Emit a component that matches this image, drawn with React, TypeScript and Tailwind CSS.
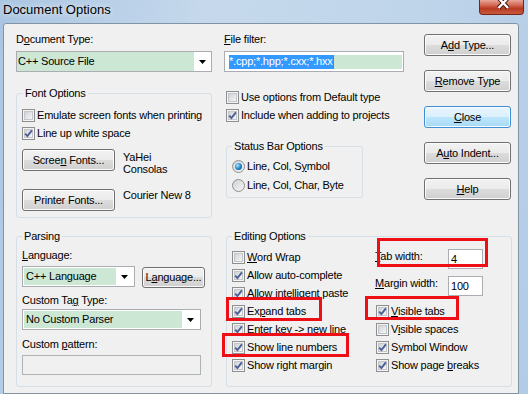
import type { ReactNode } from "react";

const font = "font-['Liberation_Sans',Arial,sans-serif]";

function U({ children }: { children: ReactNode }) {
  return <span className="underline decoration-1 underline-offset-[1px]">{children}</span>;
}

function Check({ on }: { on?: boolean }) {
  return (
    <span className="relative flex h-[13px] w-[13px] shrink-0 items-center justify-center border border-[#8e8f8f] bg-[#f4f4f4]">
      <span className="h-[9px] w-[9px] border border-[#c3c6cb] bg-[linear-gradient(135deg,#cfd2d7,#f5f5f6)]" />
      {on && (
        <svg className="absolute left-[-1px] top-[-1px]" width="13" height="13" viewBox="0 0 13 13">
          <path d="M3.2 6.6 L5.4 9.1 L9.9 3.4" fill="none" stroke="#4b5f92" strokeWidth="1.9" />
        </svg>
      )}
    </span>
  );
}

function Radio({ on }: { on?: boolean }) {
  return (
    <span className="flex h-[13px] w-[13px] shrink-0 items-center justify-center rounded-full border border-[#8e8f8f] bg-[linear-gradient(135deg,#cfd2d7,#f6f6f6)]">
      {on && (
        <span className="h-[7px] w-[7px] rounded-full bg-[radial-gradient(circle_at_35%_35%,#a6e3ff,#1b80c6_55%,#0b4d88)]" />
      )}
    </span>
  );
}

function CheckRow({ on, children, className = "" }: { on?: boolean; children: ReactNode; className?: string }) {
  return (
    <div className={`flex h-[18px] items-center gap-[2px] ${className}`}>
      <Check on={on} />
      <span>{children}</span>
    </div>
  );
}

function Btn({ children, className = "", primary }: { children: ReactNode; className?: string; primary?: boolean }) {
  const look = primary
    ? "border-[#3c8fd4] bg-[linear-gradient(#eaf6fd,#d9f0fc_50%,#bee6fd_50%,#a7d9f5)]"
    : "border-[#707070] bg-[linear-gradient(#f2f2f2,#ebebeb_50%,#dddddd_50%,#cfcfcf)]";
  return (
    <div
      className={`flex shrink-0 items-center justify-center rounded-[3px] border shadow-[inset_0_0_0_1px_#fbfbfb] ${look} ${className}`}
    >
      {children}
    </div>
  );
}

function Arrow() {
  return (
    <svg width="7" height="4" viewBox="0 0 7 4">
      <path d="M0 0h7L3.5 4z" fill="#000" />
    </svg>
  );
}

function Combo({ text, className = "", inset }: { text: string; className?: string; inset?: boolean }) {
  return (
    <div className={`flex h-[21px] border border-[#abadb3] bg-white ${inset ? "p-px" : ""} ${className}`}>
      <div className={`flex flex-1 items-center bg-[#cce8d5] ${inset ? "pl-[2px]" : "pl-px"}`}>{text}</div>
      <div className="flex w-[17px] items-center justify-center">
        <Arrow />
      </div>
    </div>
  );
}

function Group({ title, children, className = "", legendClass = "ml-[5px]" }: { title: string; children: ReactNode; className?: string; legendClass?: string }) {
  return (
    <fieldset className={`rounded-[3px] border border-[#d5dfe5] ${className}`}>
      <legend className={`px-[2px] ${legendClass}`}>{title}</legend>
      {children}
    </fieldset>
  );
}

export default function App() {
  return (
    <div
      className={`relative h-[394px] w-[528px] overflow-hidden bg-[linear-gradient(100deg,#aac5e2,#c6d9ec_35%,#bfd5ea_70%,#b3cce6)] text-[11px] leading-[13px] tracking-[-0.2px] text-black ${font}`}
    >
      {/* title bar */}
      <div className="flex h-[23px] items-start justify-between">
        <div className="ml-[3px] mt-[2px] text-[13px] leading-[16px] tracking-normal [text-shadow:0_0_6px_rgba(255,255,255,0.95)]">
          Document Options
        </div>
        <div className="mr-[4px] h-[15px] w-[45px] rounded-b-[4px] border border-t-0 border-[#7a2418] bg-[linear-gradient(#e6a89a,#d2634f_40%,#b83a22_60%,#c85a3f)]">
          <svg width="43" height="14" viewBox="0 0 43 14">
            <path d="M18.5 -2 L28 8 M28 -2 L18.5 8" stroke="#3d120c" strokeWidth="4.2" />
            <path d="M18.5 -2 L28 8 M28 -2 L18.5 8" stroke="#ffffff" strokeWidth="2.4" />
          </svg>
        </div>
      </div>

      {/* client area */}
      <div className="ml-[3px] h-[371px] w-[516px] rounded-t-[3px] border border-[#8293a4] bg-[#f0f0f0]">
        {/* top section */}
        <div className="flex pl-[12px] pt-[9px]">
          <div className="w-[196px]">
            <div>
              D<U>o</U>cument Type:
            </div>
            <Combo className="mt-[5px]" text="C++ Source File" />
            <Group title="Font Options" className="mt-[15px]" legendClass="ml-[6px]">
              <div className="pb-[6px] pl-[5px] pt-[6px]">
                <CheckRow>Emulate screen fonts when printing</CheckRow>
                <CheckRow on>Line up white space</CheckRow>
                <div className="mt-[7px] flex">
                  <Btn className="h-[22px] w-[93px]">
                    <span>
                      Scree<U>n</U> Fonts...
                    </span>
                  </Btn>
                  <div className="ml-[8px] mt-[2px] leading-[12px]">
                    YaHei
                    <br />
                    Consolas
                  </div>
                </div>
                <div className="mt-[14px] flex">
                  <Btn className="h-[22px] w-[93px]">Printer Fonts...</Btn>
                  <div className="ml-[8px]">Courier New 8</div>
                </div>
              </div>
            </Group>
          </div>

          <div className="ml-[12px] w-[180px]">
            <div>
              <U>F</U>ile filter:
            </div>
            <div className="mt-[5px] flex h-[21px] items-center border border-[#abadb3] bg-white">
              <div className="ml-[4px] mr-px flex h-[14px] flex-1 items-center bg-[#cce8d5]">
                <span className="flex h-full items-center bg-[#3399ff] text-white">*.cpp;*.hpp;*.cxx;*.hxx</span>
                <span className="h-full w-px bg-[#c8641e]" />
              </div>
            </div>
            <div className="mt-[16px] pl-[2px]">
              <CheckRow>Use options from Default type</CheckRow>
              <CheckRow on>Include when adding to projects</CheckRow>
            </div>
            <Group title="Status Bar Options" className="ml-[2px] mt-[16px] w-[137px]">
              <div className="pb-[2px] pl-[5px] pt-[4px]">
                <div className="flex h-[19px] items-center gap-[2px]">
                  <Radio on />
                  <span>
                    Line, Col, S<U>y</U>mbol
                  </span>
                </div>
                <div className="flex h-[19px] items-center gap-[2px]">
                  <Radio />
                  <span>Line, Col, Char, Byte</span>
                </div>
              </div>
            </Group>
          </div>

          <div className="ml-[20px] mt-px flex w-[87px] flex-col gap-[14px]">
            <Btn className="h-[22px]">
              <span>
                A<U>d</U>d Type...
              </span>
            </Btn>
            <Btn className="h-[22px]">
              <span>
                <U>R</U>emove Type
              </span>
            </Btn>
            <Btn className="h-[22px]" primary>
              <span>
                <U>C</U>lose
              </span>
            </Btn>
            <Btn className="h-[22px]">
              <span>
                A<U>u</U>to Indent...
              </span>
            </Btn>
            <Btn className="h-[22px]">
              <span>
                <U>H</U>elp
              </span>
            </Btn>
          </div>
        </div>

        {/* bottom section */}
        <div className="mt-[12px] flex pl-[12px]">
          <Group title="Parsing" className="w-[196px]">
            <div className="pb-[11px] pl-[5px] pt-[6px]">
              <div>
                <U>L</U>anguage:
              </div>
              <div className="mt-[4px] flex items-start">
                <Combo inset className="w-[113px]" text="C++ Language" />
                <Btn className="ml-[7px] mt-px h-[21px] w-[63px]">
                  <span>
                    L<U>a</U>nguage...
                  </span>
                </Btn>
              </div>
              <div className="mt-[6px]">
                Custom Ta<U>g</U> Type:
              </div>
              <Combo inset className="mt-[2px] w-[179px]" text="No Custom Parser" />
              <div className="mt-[8px]">
                Custom <U>p</U>attern:
              </div>
              <div className="mt-[4px] h-[20px] w-[179px] border border-[#adb2b5] bg-[#f0f0f0]" />
            </div>
          </Group>

          <Group title="Editing Options" className="ml-[14px] w-[286px]">
            <div className="flex pb-[12px]">
              <div className="w-[148px] pl-[5px] pt-[5px]">
                <CheckRow>
                  <U>W</U>ord Wrap
                </CheckRow>
                <CheckRow on>Allow auto-complete</CheckRow>
                <CheckRow on>Allow intelligent paste</CheckRow>
                <CheckRow on>
                  Ex<U>p</U>and tabs
                </CheckRow>
                <CheckRow on>
                  Enter <U>k</U>ey -&gt; new line
                </CheckRow>
                <CheckRow on>Show line numbers</CheckRow>
                <CheckRow on>Show right margin</CheckRow>
              </div>
              <div className="w-[108px] pt-[6px]">
                <div className="flex h-[20px] items-start justify-between">
                  <span className="mt-px">
                    <U>T</U>ab width:
                  </span>
                  <div className="flex h-[20px] w-[35px] items-center border border-[#abadb3] bg-white pl-[2px]">4</div>
                </div>
                <div className="mt-[7px] flex h-[20px] items-start justify-between">
                  <span className="mt-px">
                    <U>M</U>argin width:
                  </span>
                  <div className="flex h-[20px] w-[35px] items-center border border-[#abadb3] bg-white pl-[2px]">100</div>
                </div>
                <div className="mt-[6px] pl-px">
                  <CheckRow on>
                    <U>V</U>isible tabs
                  </CheckRow>
                  <CheckRow>
                    V<U>i</U>sible spaces
                  </CheckRow>
                  <CheckRow on>Symbol Window</CheckRow>
                  <CheckRow on>
                    Show page <U>b</U>reaks
                  </CheckRow>
                </div>
              </div>
            </div>
          </Group>
        </div>
      </div>

      {/* red annotation boxes */}
      <div className="absolute left-[377px] top-[238px] h-[29px] w-[111px] border-[3px] border-[#ee0f16]" />
      <div className="absolute left-[365px] top-[296px] h-[24px] w-[94px] border-[3px] border-[#ee0f16]" />
      <div className="absolute left-[226px] top-[297px] h-[24px] w-[96px] border-[3px] border-[#ee0f16]" />
      <div className="absolute left-[222px] top-[333px] h-[24px] w-[127px] border-[3px] border-[#ee0f16]" />
    </div>
  );
}
